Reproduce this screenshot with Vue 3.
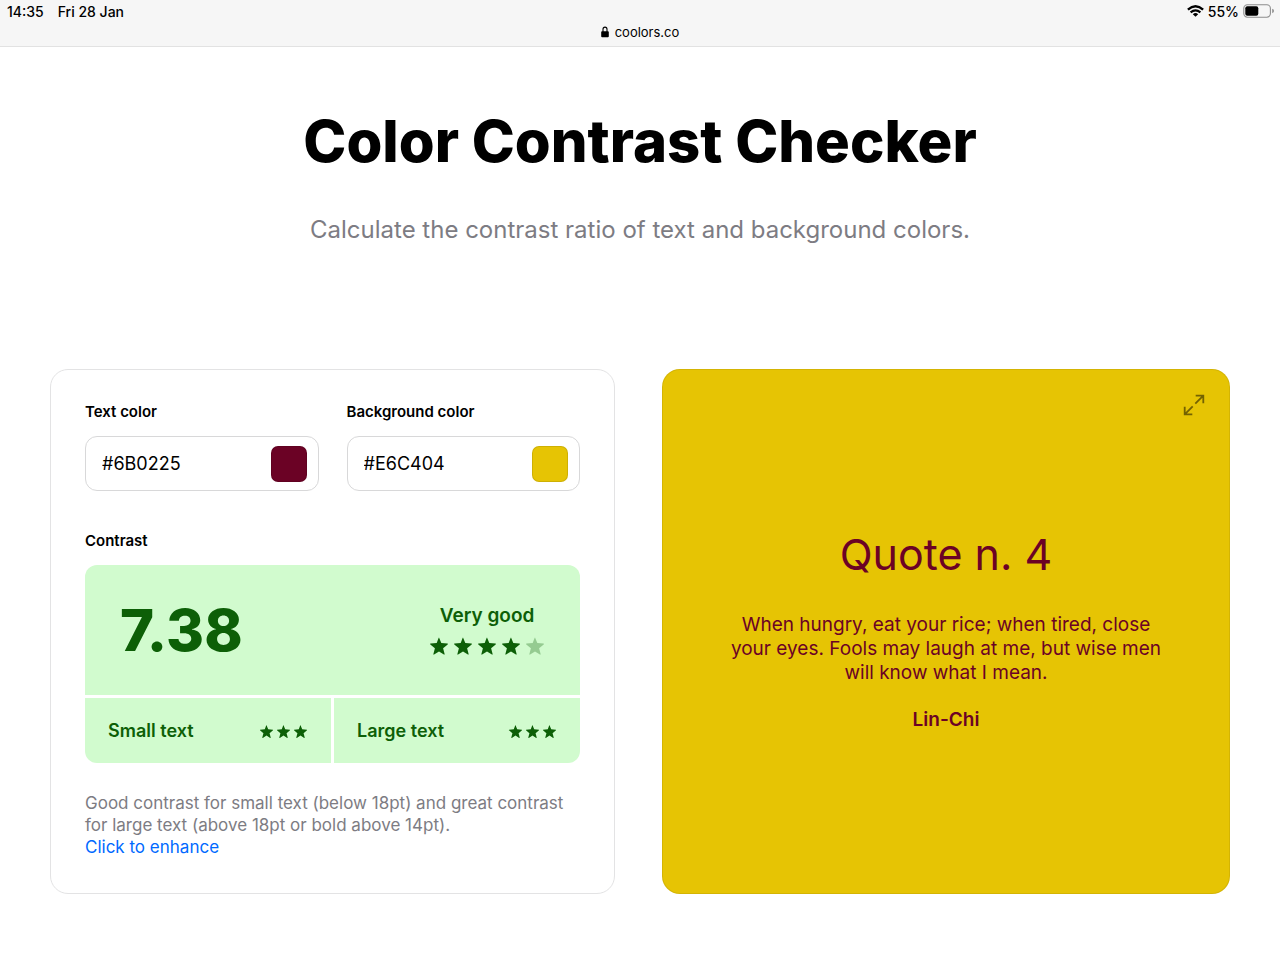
<script setup>
import { ref } from 'vue'

const textColor = ref('#6B0225')
const backgroundColor = ref('#E6C404')
const star =
  'M10 1.6 12.3 7.1 18.5 7.6Q19.2 7.8 18.7 8.4L14.1 12.2 15.6 18.1Q15.6 18.9 14.9 18.6L10 15.4 5.1 18.6Q4.4 18.9 4.4 18.1L5.9 12.2 1.3 8.4Q.8 7.8 1.5 7.6L7.7 7.1 9.6 1.9Q10 1 10.4 1.9Z'
</script>

<template>
  <div class="page">
    <header class="browser">
      <div class="status">
        <div class="status-group clock">
          <span>14:35</span>
          <span>Fri 28 Jan</span>
        </div>
        <div class="status-group">
          <svg class="wifi" viewBox="0 0 17 12" aria-hidden="true">
            <path d="M.9 4.6Q8.5-2 16.1 4.6" fill="none" stroke="#000" stroke-width="2.4" />
            <path d="M3.6 7.4Q8.5 3.3 13.4 7.4" fill="none" stroke="#000" stroke-width="2.2" />
            <path d="M8.5 11.8 5.8 9.2Q8.5 7 11.2 9.2Z" />
          </svg>
          <span>55%</span>
          <svg class="battery" viewBox="0 0 32 14" aria-hidden="true">
            <rect x=".8" y=".8" width="26.6" height="12.4" rx="3.6" fill="none" stroke="#8d8d8d" stroke-width="1.1" />
            <rect x="2.3" y="2.3" width="13" height="9.4" rx="2" />
            <path d="M29.2 4.8Q31 5.4 31 7T29.2 9.2Z" fill="#8d8d8d" />
          </svg>
        </div>
      </div>
      <div class="address">
        <svg class="lock" viewBox="0 0 8 12" aria-hidden="true">
          <path d="M2 6V3.3a2 2.2 0 0 1 4 0V6" fill="none" stroke="#000" stroke-width="1.1" />
          <rect x=".2" y="5.2" width="7.6" height="6" rx=".9" />
        </svg>
        <span>coolors.co</span>
      </div>
    </header>

    <main>
      <h1>Color Contrast Checker</h1>
      <p class="subtitle">Calculate the contrast ratio of text and background colors.</p>

      <div class="panels">
        <section class="checker">
          <div class="fields">
            <div class="field">
              <label for="text-color">Text color</label>
              <div class="control">
                <input id="text-color" v-model="textColor" class="hex" type="text" />
                <input v-model="textColor" class="swatch" type="color" aria-label="Pick text color" />
              </div>
            </div>
            <div class="field">
              <label for="background-color">Background color</label>
              <div class="control">
                <input id="background-color" v-model="backgroundColor" class="hex" type="text" />
                <input v-model="backgroundColor" class="swatch" type="color" aria-label="Pick background color" />
              </div>
            </div>
          </div>

          <h2>Contrast</h2>
          <div class="result">
            <div class="score">
              <strong class="ratio">7.38</strong>
              <div class="rating">
                <span>Very good</span>
                <div class="stars large">
                  <svg v-for="n in 5" :key="n" :class="{ faded: n === 5 }" viewBox="0 0 20 20" aria-hidden="true">
                    <path :d="star" />
                  </svg>
                </div>
              </div>
            </div>
            <div v-for="size in ['Small text', 'Large text']" :key="size" class="level">
              <span>{{ size }}</span>
              <div class="stars">
                <svg v-for="n in 3" :key="n" viewBox="0 0 20 20" aria-hidden="true"><path :d="star" /></svg>
              </div>
            </div>
          </div>

          <p class="summary">
            Good contrast for small text (below 18pt) and great contrast for large text (above 18pt or bold above 14pt).<br />
            <a href="#enhance">Click to enhance</a>
          </p>
        </section>

        <section class="preview" :style="{ color: textColor, backgroundColor: backgroundColor }">
          <button class="expand" type="button" aria-label="Fullscreen">
            <svg viewBox="0 0 22 22" aria-hidden="true">
              <path d="M12.3 9.7 20.3 1.7M12.7 1.7H20.3V9.3M9.7 12.3 1.7 20.3M1.7 12.7V20.3H9.3" />
            </svg>
          </button>
          <h2 class="quote-title">Quote n. 4</h2>
          <p class="quote">
            When hungry, eat your rice; when tired, close your eyes. Fools may laugh at me, but wise men will know what I mean.
          </p>
          <p class="author">Lin-Chi</p>
        </section>
      </div>
    </main>
  </div>
</template>

<style>
body {
  background: #fff;
}
</style>

<style scoped>
.page {
  font-family: Inter, "Liberation Sans", sans-serif;
  color: #000;
}
.page * {
  box-sizing: border-box;
}
h1,
h2,
p {
  margin: 0;
}
svg {
  display: block;
}
.browser {
  background: #f6f6f6;
  border-bottom: 1px solid #e2e2e2;
  padding-bottom: 4px;
  font-size: 14px;
}
.status {
  display: flex;
  justify-content: space-between;
  align-items: center;
  height: 22px;
  padding: 0 5px 0 7px;
  font-weight: 500;
}
.status-group {
  display: flex;
  align-items: center;
  gap: 4px;
}
.clock {
  gap: 14px;
}
.wifi {
  width: 17px;
  height: 12px;
}
.battery {
  width: 32px;
  height: 14px;
}
.address {
  display: flex;
  align-items: center;
  justify-content: center;
  gap: 6px;
  height: 20px;
  font-size: 13px;
}
.lock {
  width: 8px;
  height: 12px;
}
main {
  padding: 58px 50px 64px;
  text-align: center;
}
h1 {
  font-size: 58px;
  font-weight: 800;
  line-height: 72px;
}
.subtitle {
  margin-top: 35px;
  color: #7d7c83;
  font-size: 24px;
  line-height: 36px;
}
.panels {
  display: grid;
  grid-template-columns: minmax(0, 565fr) minmax(0, 568fr);
  gap: 47px;
  margin-top: 121px;
}
.checker {
  border: 1px solid #e3e3e4;
  border-radius: 18px;
  padding: 30px 34px 35px;
  text-align: left;
}
.fields {
  display: grid;
  grid-template-columns: repeat(2, minmax(0, 1fr));
  gap: 28px;
}
label,
.checker h2 {
  display: block;
  font-size: 15px;
  font-weight: 600;
  line-height: 24px;
}
.control {
  display: flex;
  align-items: center;
  height: 55px;
  margin-top: 12px;
  padding: 0 11px 0 16px;
  border: 1px solid #d8d8d9;
  border-radius: 12px;
}
.hex {
  flex: 1;
  min-width: 0;
  padding: 0;
  border: 0;
  outline: 0;
  background: none;
  color: #000;
  font: 400 18px Inter, sans-serif;
}
.swatch {
  flex: none;
  width: 36px;
  height: 36px;
  padding: 0;
  border: 0;
  background: none;
  appearance: none;
}
.swatch::-webkit-color-swatch-wrapper {
  padding: 0;
}
.swatch::-webkit-color-swatch {
  border: 1px solid rgba(0, 0, 0, 0.1);
  border-radius: 7px;
}
.checker h2 {
  margin-top: 38px;
}
.result {
  display: grid;
  grid-template-columns: 1fr 1fr;
  gap: 3px;
  margin-top: 12px;
  border-radius: 12px;
  overflow: hidden;
  color: #0d5f07;
}
.score {
  grid-column: 1 / -1;
  display: flex;
  align-items: center;
  justify-content: space-between;
  height: 130px;
  padding: 0 35px;
  background: #d1fbce;
}
.ratio {
  font-size: 58px;
  font-weight: 800;
}
.rating {
  display: flex;
  flex-direction: column;
  align-items: center;
  gap: 8px;
  font-size: 19px;
  font-weight: 600;
  line-height: 24px;
}
.level {
  display: flex;
  align-items: center;
  justify-content: space-between;
  height: 65px;
  padding: 0 23px;
  background: #d1fbce;
  font-size: 18px;
  font-weight: 600;
}
.stars {
  display: flex;
  gap: 2px;
  padding-top: 2px;
  fill: currentColor;
}
.stars svg {
  width: 15px;
  height: 15px;
}
.stars.large {
  gap: 4px;
  padding: 0;
}
.stars.large svg {
  width: 20px;
  height: 20px;
}
.faded {
  opacity: 0.3;
}
.summary {
  margin-top: 29px;
  color: #7d7c83;
  font-size: 17px;
  line-height: 22px;
}
.summary a {
  color: #0069ff;
  text-decoration: none;
}
.preview {
  position: relative;
  display: flex;
  flex-direction: column;
  align-items: center;
  justify-content: center;
  border: 1px solid rgba(0, 0, 0, 0.08);
  border-radius: 18px;
  padding: 48px 64px 54px;
}
.expand {
  position: absolute;
  top: 24px;
  right: 24px;
  padding: 0;
  border: 0;
  background: none;
}
.expand svg {
  width: 22px;
  height: 22px;
  fill: none;
  stroke: #736202;
  stroke-width: 1.8;
}
.quote-title {
  font-size: 43px;
  font-weight: 400;
  line-height: 56px;
}
.quote {
  margin-top: 31px;
  font-size: 19px;
  line-height: 24px;
}
.author {
  margin-top: 23px;
  font-size: 19px;
  font-weight: 600;
  line-height: 24px;
}
</style>
